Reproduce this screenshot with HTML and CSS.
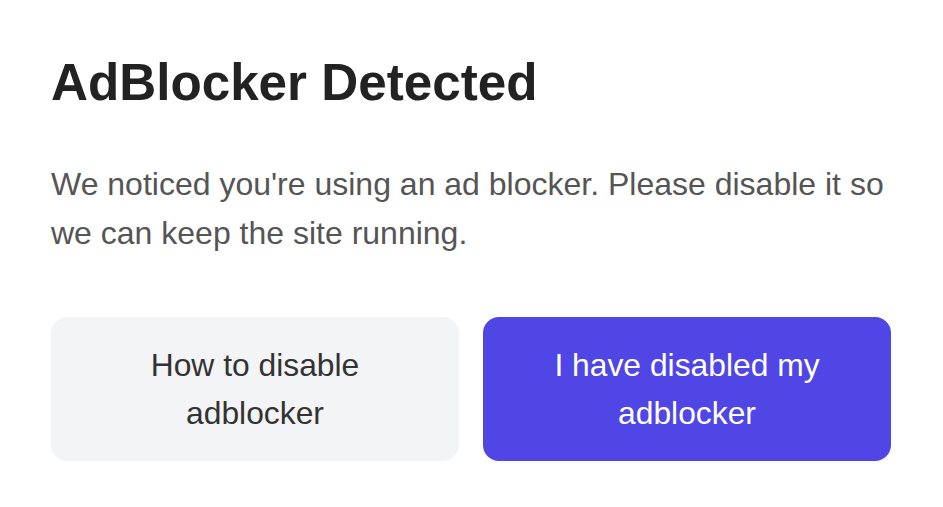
FILE: index.html
```html
<!DOCTYPE html>
<html lang="en">
<head>
<meta charset="utf-8">
<title>AdBlocker Detected</title>
<link rel="stylesheet" href="styles.css">
</head>
<body>
<div class="modal">
  <h1 class="title">AdBlocker Detected</h1>
  <p class="message">We noticed you're using an ad blocker. Please disable it so we can keep the site running.</p>
  <div class="actions">
    <button class="btn btn-secondary" type="button">How to disable adblocker</button>
    <button class="btn btn-primary" type="button">I have disabled my adblocker</button>
  </div>
</div>
</body>
</html>
```
FILE: styles.css
```css
html, body {
  margin: 0;
  padding: 0;
  background: #ffffff;
}

body {
  font-family: "Liberation Sans", Arial, Helvetica, sans-serif;
}

.modal {
  width: 840px;
  padding: 53px 52px 0 51px;
}

.title {
  margin: 0;
  font-size: 51.2px;
  line-height: 60px;
  font-weight: 700;
  color: #222222;
}

.message {
  margin: 47px 0 0;
  font-size: 32px;
  line-height: 49px;
  color: #555555;
}

.actions {
  display: grid;
  grid-template-columns: 1fr 1fr;
  gap: 24px;
  margin-top: 59px;
}

.btn {
  font-family: inherit;
  font-size: 31.8px;
  line-height: 48px;
  padding: 24px 30px;
  border: none;
  border-radius: 16px;
  text-align: center;
  cursor: pointer;
}

.btn-secondary {
  background: #f3f4f6;
  color: #333333;
}

.btn-primary {
  background: #4f46e5;
  color: #ffffff;
}
```
